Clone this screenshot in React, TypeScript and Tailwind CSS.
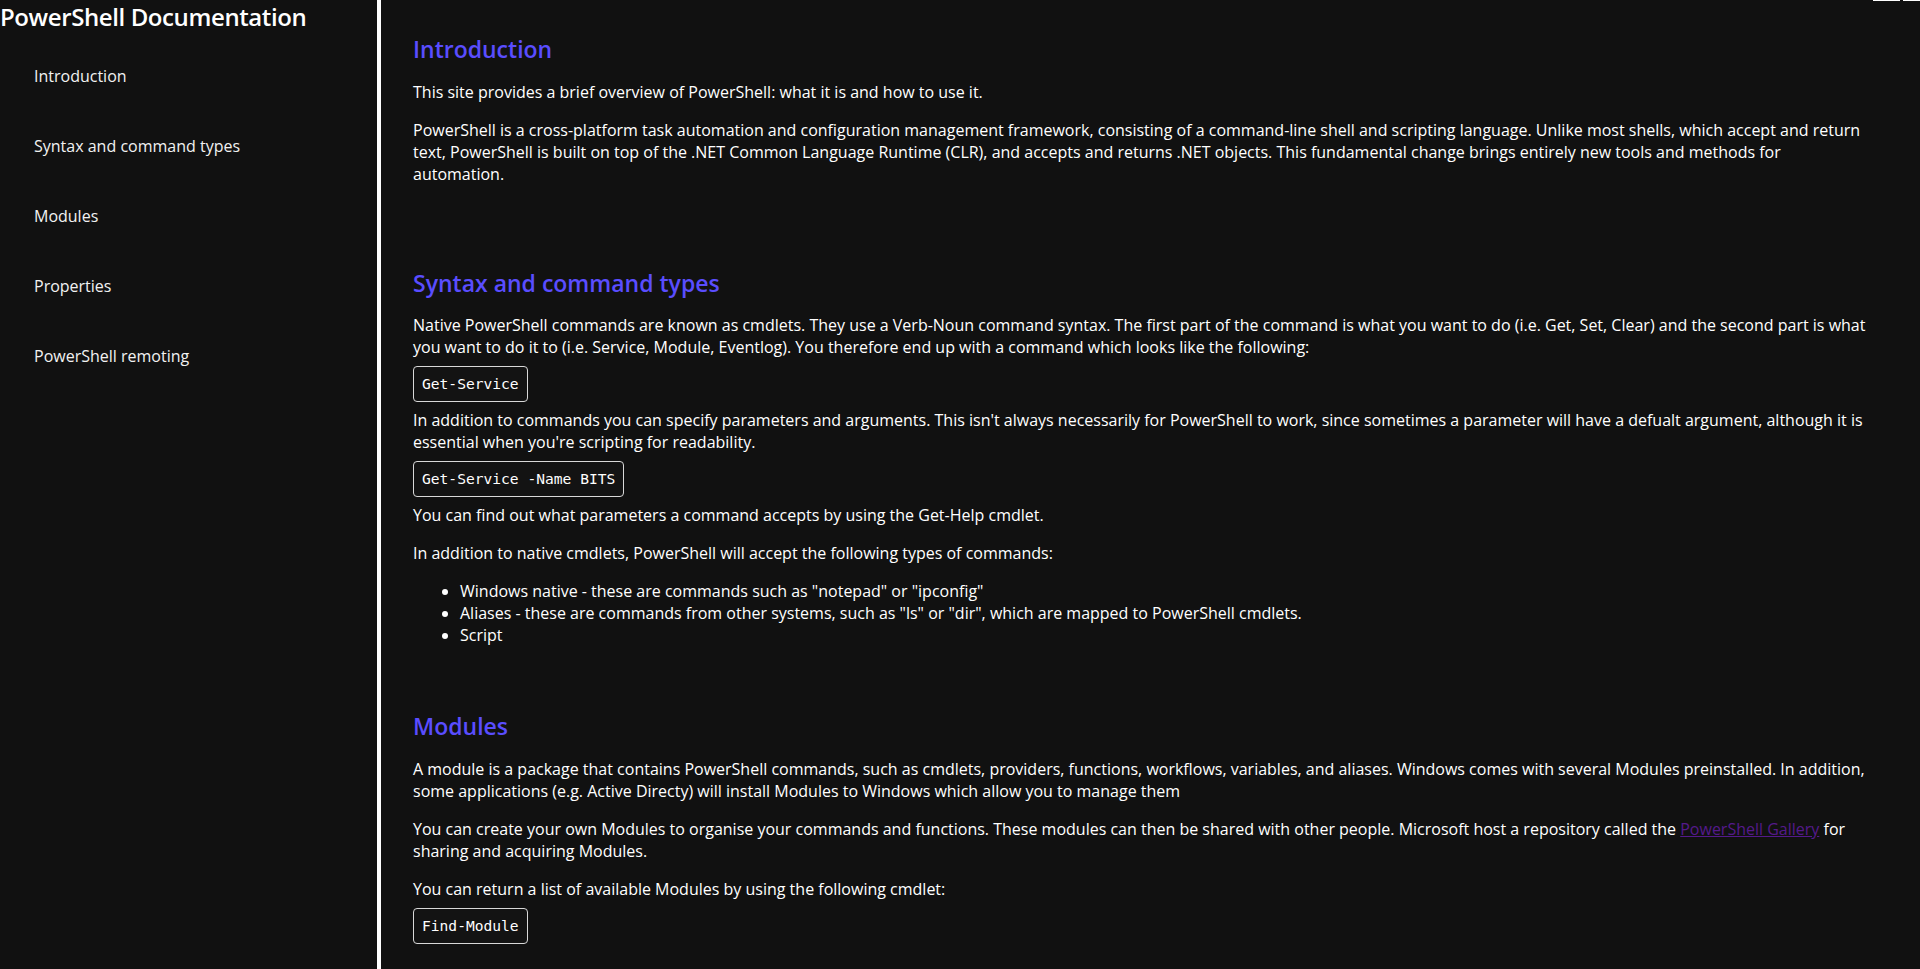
import React from "react";

const navItems = [
  "Introduction",
  "Syntax and command types",
  "Modules",
  "Properties",
  "PowerShell remoting",
];

function Code({ children, className = "" }: { children: React.ReactNode; className?: string }) {
  return (
    <div className={"flex " + className}>
      <code className="inline-flex h-[36px] items-center rounded-[4px] border border-[#d8d8d8] bg-[#131313] px-[8px] font-['DejaVu_Sans_Mono',monospace] text-[14.6px] leading-none text-white">
        {children}
      </code>
    </div>
  );
}

export default function App() {
  return (
    <div className="relative flex min-h-[969px] w-full bg-[#111111] font-['Open_Sans',sans-serif] text-white">
      <div className="absolute left-[1873px] top-0 h-[1px] w-[27px] bg-white" />
      <div className="absolute left-[1903px] top-0 h-[1px] w-[17px] bg-white" />
      <aside className="w-[381px] shrink-0 border-r-[4px] border-white">
        <h1 className="m-0 pt-[1px] text-[24px] font-semibold leading-[32px] tracking-[-0.4px] text-white">
          PowerShell Documentation
        </h1>
        <nav className="mt-[8px]">
          <ul>
            {navItems.map((item) => (
              <li key={item} className="flex h-[70px] items-center pl-[34px] text-[16px] text-[#f2f2f2]">
                {item}
              </li>
            ))}
          </ul>
        </nav>
      </aside>
      <main className="flex-1 pl-[32px] pr-[50px] pt-[33px] text-[16px] leading-[22px] text-white">
        <section className="flex flex-col">
          <h2 className="mb-[16px] text-[23px] font-semibold leading-[32px] text-[#5a4dff]">Introduction</h2>
          <p className="mb-[16px]">This site provides a brief overview of PowerShell: what it is and how to use it.</p>
          <p>
            PowerShell is a cross-platform task automation and configuration management framework, consisting of a
            command-line shell and scripting language. Unlike most shells, which accept and return text, PowerShell is
            built on top of the .NET Common Language Runtime (CLR), and accepts and returns .NET objects. This
            fundamental change brings entirely new tools and methods for automation.
          </p>
        </section>
        <section className="mt-[82px] flex flex-col">
          <h2 className="mb-[15px] text-[23px] font-semibold leading-[32px] text-[#5a4dff]">Syntax and command types</h2>
          <p>
            Native PowerShell commands are known as cmdlets. They use a Verb-Noun command syntax. The first part of the
            command is what you want to do (i.e. Get, Set, Clear) and the second part is what you want to do it to (i.e.
            Service, Module, Eventlog). You therefore end up with a command which looks like the following:
          </p>
          <Code className="mt-[8px]">Get-Service</Code>
          <p className="mt-[7px]">
            In addition to commands you can specify parameters and arguments. This isn't always necessarily for
            PowerShell to work, since sometimes a parameter will have a defualt argument, although it is essential when
            you're scripting for readability.
          </p>
          <Code className="mt-[8px]">Get-Service -Name BITS</Code>
          <p className="mt-[7px]">You can find out what parameters a command accepts by using the Get-Help cmdlet.</p>
          <p className="mt-[16px]">In addition to native cmdlets, PowerShell will accept the following types of commands:</p>
          <ul className="mt-[16px] list-disc pl-[47px]">
            <li>Windows native - these are commands such as "notepad" or "ipconfig"</li>
            <li>Aliases - these are commands from other systems, such as "ls" or "dir", which are mapped to PowerShell cmdlets.</li>
            <li>Script</li>
          </ul>
        </section>
        <section className="mt-[64px] flex flex-col">
          <h2 className="mb-[16px] text-[23px] font-semibold leading-[32px] text-[#5a4dff]">Modules</h2>
          <p>
            A module is a package that contains PowerShell commands, such as cmdlets, providers, functions, workflows,
            variables, and aliases. Windows comes with several Modules preinstalled. In addition, some applications (e.g.
            Active Directy) will install Modules to Windows which allow you to manage them
          </p>
          <p className="mt-[16px]">
            You can create your own Modules to organise your commands and functions. These modules can then be shared with
            other people. Microsoft host a repository called the{" "}
            <a href="#" className="text-[#551a8b] underline">PowerShell Gallery</a> for sharing and acquiring Modules.
          </p>
          <p className="mt-[16px]">You can return a list of available Modules by using the following cmdlet:</p>
          <Code className="mt-[8px]">Find-Module</Code>
        </section>
      </main>
    </div>
  );
}
